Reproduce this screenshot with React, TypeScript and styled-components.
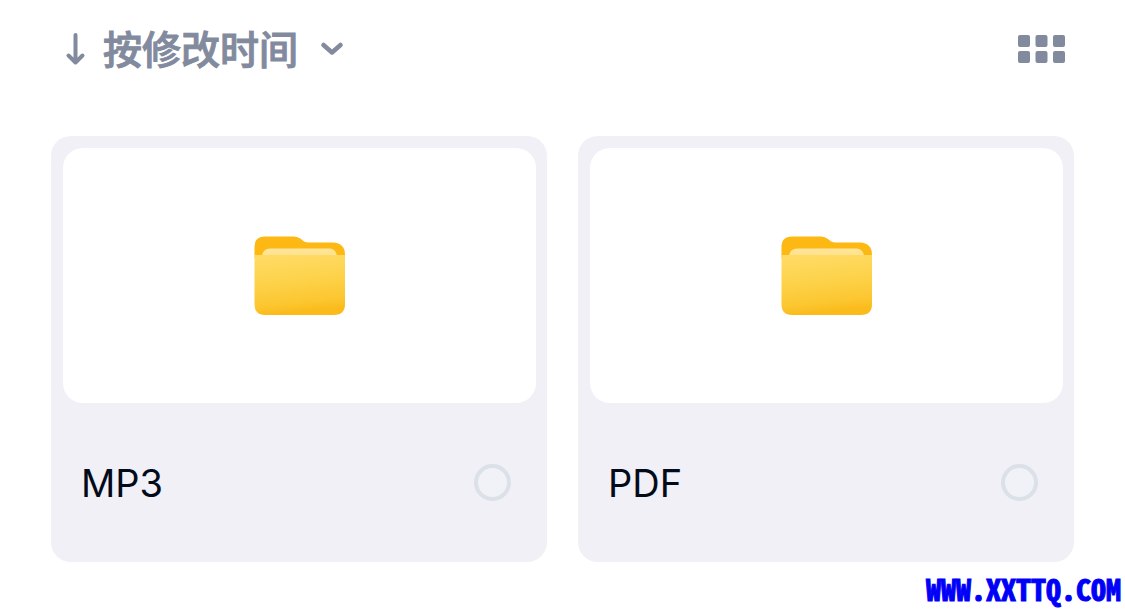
import React from "react";
import styled, { createGlobalStyle } from "styled-components";

const GlobalStyle = createGlobalStyle`
  *, *::before, *::after { box-sizing: border-box; }
  body {
    margin: 0;
    background: #fff;
    font-family: Inter, "Noto Sans CJK SC", sans-serif;
  }
`;

const Page = styled.div`
  display: flex;
  flex-direction: column;
`;

const Toolbar = styled.header`
  display: flex;
  align-items: center;
  justify-content: space-between;
  height: 98px;
  padding: 0 59px 0 64px;
`;

const ToolButton = styled.button`
  display: flex;
  align-items: center;
  padding: 0;
  border: 0;
  background: none;
  color: #828a9e;
  font: 500 39px/48px "Noto Sans CJK SC", sans-serif;
  cursor: pointer;

  svg { display: block; }
`;

const SortLabel = styled.span`
  margin: 0 21px 0 16px;
  padding-bottom: 4px;
  -webkit-text-stroke: 1px currentColor;
`;

const Grid = styled.main`
  display: grid;
  grid-template-columns: repeat(2, 1fr);
  gap: 31px;
  padding: 38px 51px 0;
`;

const Card = styled.article`
  display: flex;
  flex-direction: column;
  padding: 12px 11px 0 12px;
  border-radius: 20px;
  background: #f0f0f6;
`;

const Preview = styled.div`
  display: flex;
  align-items: center;
  justify-content: center;
  height: 255px;
  border-radius: 20px;
  background: #fff;
`;

const Caption = styled.label`
  display: flex;
  align-items: center;
  justify-content: space-between;
  height: 159px;
  padding: 0 25px 0 18px;
  color: #030b1a;
  font-size: 38px;
  line-height: 48px;
`;

const Radio = styled.input`
  appearance: none;
  width: 37px;
  height: 37px;
  margin: 0;
  border: 4px solid #dbe0e9;
  border-radius: 50%;
  background: #f0f2f7;

  &:checked { background: #828a9e; }
`;

const SiteMark = styled.footer`
  align-self: flex-end;
  padding: 8px 4px 3px 0;
  color: #0000f8;
  font: 700 30px/36px "Noto Sans Mono CJK SC", "Noto Sans CJK SC", sans-serif;
  -webkit-text-stroke: 1px #0000f8;
`;

const SortArrow = () => (
  <svg width="23" height="34" viewBox="0 0 23 34" fill="none" stroke="currentColor" strokeWidth="4" strokeLinecap="round" strokeLinejoin="round" aria-hidden="true">
    <path d="M11.5 3V30M4.5 23.5L11.5 30.5L18.5 23.5" />
  </svg>
);

const Chevron = () => (
  <svg width="26" height="16" viewBox="0 0 26 16" fill="none" stroke="currentColor" strokeWidth="4.5" strokeLinecap="round" strokeLinejoin="round" aria-hidden="true">
    <path d="M4.5 4L13 11.5L21.5 4" />
  </svg>
);

const TilesIcon = () => (
  <svg width="48" height="30" viewBox="0 0 48 30" fill="currentColor" aria-hidden="true">
    {[0, 17.5, 35].map((x) =>
      [1, 17].map((y) => <rect key={`${x}-${y}`} x={x} y={y} width="12" height="12" rx="2" />)
    )}
  </svg>
);

const FolderIcon = ({ id }: { id: string }) => (
  <svg width="92" height="80" viewBox="0 0 92 80" aria-hidden="true">
    <defs>
      <linearGradient id={`${id}-front`} x1="0" y1="0" x2="0.15" y2="1">
        <stop offset="0" stopColor="#ffdc68" />
        <stop offset="0.45" stopColor="#fdd34c" />
        <stop offset="0.85" stopColor="#fcc630" />
        <stop offset="1" stopColor="#fabb1b" />
      </linearGradient>
      <linearGradient id={`${id}-paper`} x1="0" y1="0" x2="0" y2="1">
        <stop offset="0" stopColor="#ffe69c" />
        <stop offset="1" stopColor="#ffdf83" />
      </linearGradient>
    </defs>
    <path d="M0.5 22V11Q0.5 0.5 11 0.5H40Q44 0.5 47 3L50 5.5Q52 6.5 55 6.5H79Q91 7 91 19V22Z" fill="#fdb813" />
    <path d="M8 24V20Q9 12.5 16 12.5H76Q82 13 83 20V24Z" fill={`url(#${id}-paper)`} />
    <path d="M0.5 19H91V68Q91 79 80 79H11Q0.5 79 0.5 68Z" fill={`url(#${id}-front)`} />
  </svg>
);

const folders = ["MP3", "PDF"];

export default function App() {
  return (
    <Page>
      <GlobalStyle />
      <Toolbar>
        <ToolButton type="button">
          <SortArrow />
          <SortLabel>按修改时间</SortLabel>
          <Chevron />
        </ToolButton>
        <ToolButton type="button" aria-label="网格视图">
          <TilesIcon />
        </ToolButton>
      </Toolbar>
      <Grid>
        {folders.map((name) => (
          <Card key={name}>
            <Preview>
              <FolderIcon id={`folder-${name}`} />
            </Preview>
            <Caption>
              {name}
              <Radio type="radio" name="folder" value={name} />
            </Caption>
          </Card>
        ))}
      </Grid>
      <SiteMark>WWW.XXTTQ.COM</SiteMark>
    </Page>
  );
}
